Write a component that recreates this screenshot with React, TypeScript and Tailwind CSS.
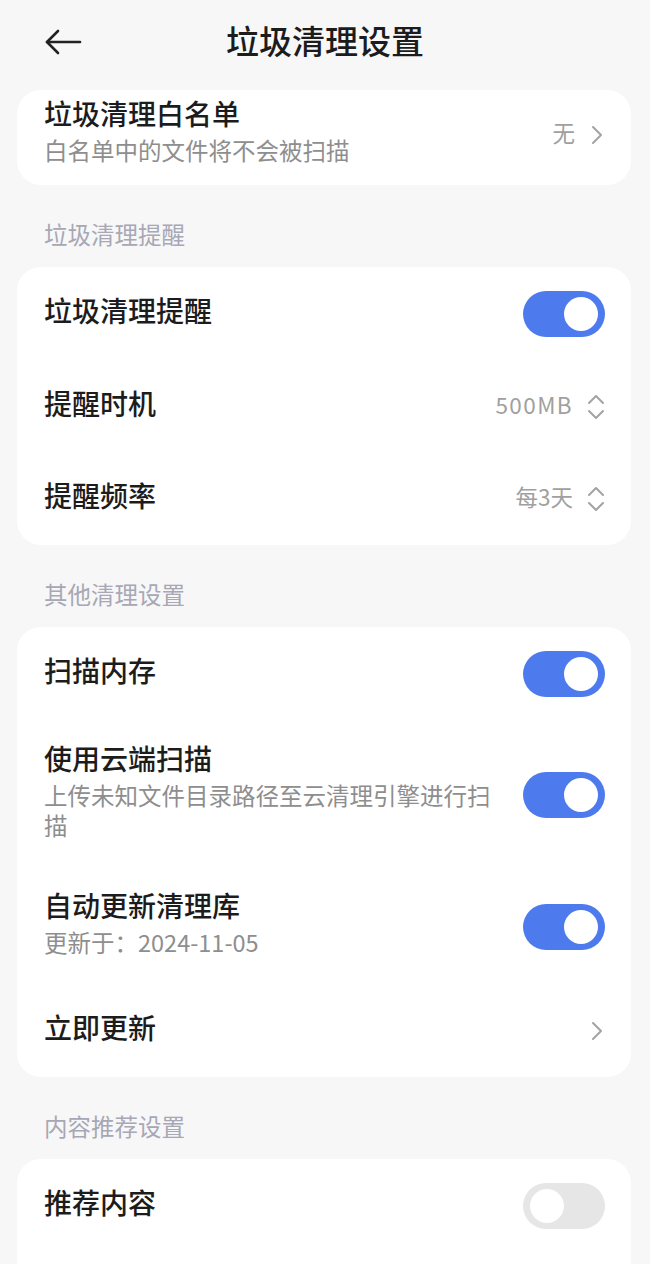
import React from 'react';

const FONT = { fontFamily: '"Noto Sans CJK SC", "Noto Sans", sans-serif' };

function Toggle({ on }: { on: boolean }) {
  return (
    <div className={`relative w-[82px] h-[46px] rounded-full shrink-0 ${on ? 'bg-[#4d7bee]' : 'bg-[#e6e6e6]'}`}>
      <div className={`absolute top-[6px] w-[34px] h-[34px] rounded-full bg-white ${on ? 'right-[7px]' : 'left-[7px]'}`} />
    </div>
  );
}

function Chevron() {
  return (
    <svg width="16" height="24" viewBox="0 0 16 24" fill="none" stroke="#a3a3a3" strokeWidth="2" strokeLinecap="round" strokeLinejoin="round">
      <path d="M4 4l8 8-8 8" />
    </svg>
  );
}

function UpDown() {
  return (
    <svg width="18" height="26" viewBox="0 0 18 26" fill="none" stroke="#a3a3a3" strokeWidth="2" strokeLinecap="round" strokeLinejoin="round">
      <path d="M2 9l7-7 7 7" />
      <path d="M2 17l7 7 7-7" />
    </svg>
  );
}

function Row({ title, sub, right, pad }: { title: string; sub?: string; right?: React.ReactNode; pad?: string }) {
  return (
    <div className={`flex items-center min-h-[92px] pl-[27px] pr-[26px] ${pad ?? 'py-[24px]'}`}>
      {/* small nudge: CJK glyphs sit low in their line box */}
      <div className="relative -top-[4px] flex-1 min-w-0 pr-[28px]">
        <div className="text-[28px] leading-[34px] font-medium text-[#1c1c1c]">{title}</div>
        {sub && <div className="mt-[5px] text-[23.5px] leading-[30px] text-[#8e8e8e]">{sub}</div>}
      </div>
      {right}
    </div>
  );
}

function Value({ text, icon, wide }: { text?: string; icon: React.ReactNode; wide?: boolean }) {
  return (
    <div className="flex items-center gap-[14px] shrink-0">
      {text && <span className={`relative -top-[2px] text-[22.5px] text-[#a0a0a0] ${wide ? 'tracking-[1.4px]' : ''}`}>{text}</span>}
      {icon}
    </div>
  );
}

function Section({ label }: { label: string }) {
  return <div className="mt-[34px] mb-[18px] pl-[27px] text-[23.5px] leading-[30px] text-[#a7a7b5]">{label}</div>;
}

export default function App() {
  return (
    <div style={FONT} className="min-h-[1264px] bg-[#f7f7f7] overflow-hidden">
      {/* Header */}
      <div className="relative h-[90px] flex items-center justify-center">
        <svg className="absolute left-[44px] top-[29px]" width="38" height="26" viewBox="0 0 38 26" fill="none" stroke="#222" strokeWidth="2.6" strokeLinecap="round" strokeLinejoin="round">
          <path d="M36 13H3" />
          <path d="M14 2L3 13l11 11" />
        </svg>
        <h1 className="text-[33px] font-medium text-[#1c1c1c] mt-[-8px]">垃圾清理设置</h1>
      </div>

      <div className="ml-[17px] mr-[19px]">
        <div className="bg-white rounded-[24px]">
          <Row title="垃圾清理白名单" sub="白名单中的文件将不会被扫描" pad="pt-[10px] pb-[16px]" right={<Value text="无" icon={<Chevron />} />} />
        </div>

        <Section label="垃圾清理提醒" />
        <div className="bg-white rounded-[24px]">
          <Row title="垃圾清理提醒" right={<Toggle on />} />
          <Row title="提醒时机" right={<Value text="500MB" wide icon={<UpDown />} />} />
          <Row title="提醒频率" right={<Value text="每3天" icon={<UpDown />} />} />
        </div>

        <Section label="其他清理设置" />
        <div className="bg-white rounded-[24px]">
          <Row title="扫描内存" right={<Toggle on />} />
          <Row title="使用云端扫描" sub="上传未知文件目录路径至云清理引擎进行扫描" right={<Toggle on />} />
          <Row title="自动更新清理库" sub="更新于：2024-11-05" right={<Toggle on />} />
          <Row title="立即更新" right={<Value icon={<Chevron />} />} />
        </div>

        <Section label="内容推荐设置" />
        <div className="bg-white rounded-[24px] h-[140px]">
          <Row title="推荐内容" right={<Toggle on={false} />} />
        </div>
      </div>
    </div>
  );
}
